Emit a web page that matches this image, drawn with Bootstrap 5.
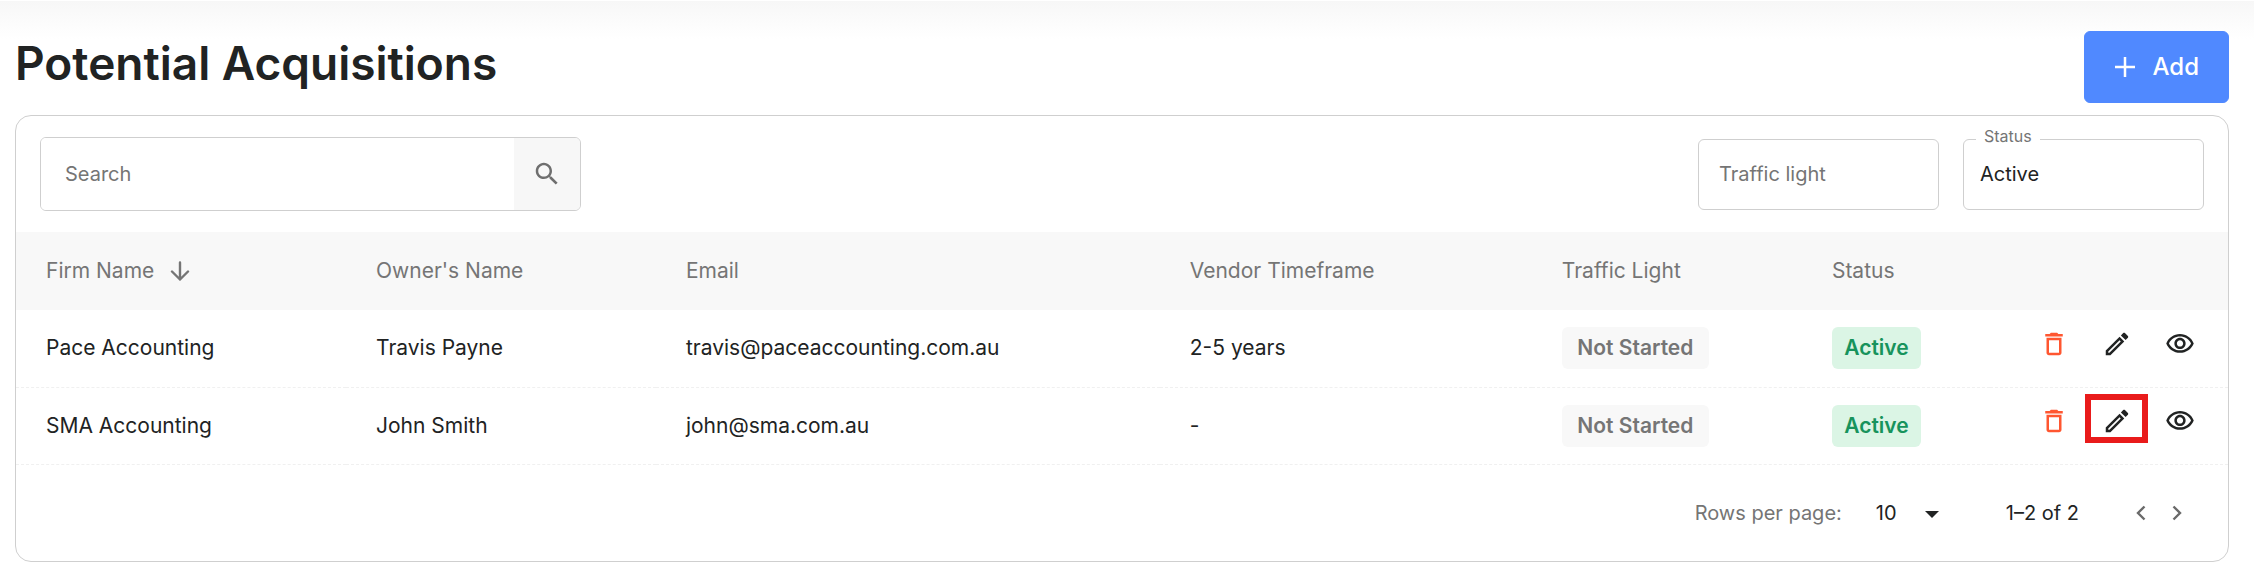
<!DOCTYPE html>
<html lang="en">
<head>
<meta charset="utf-8">
<meta name="viewport" content="width=device-width, initial-scale=1">
<title>Potential Acquisitions</title>
<link href="https://cdn.jsdelivr.net/npm/bootstrap@5.3.0/dist/css/bootstrap.min.css" rel="stylesheet">
<style>
  :root { --ink: #212323; --soft: #757575; --line: #cfcfcf; --tint: #f8f8f8; }
  body { font-family: Inter, "Open Sans", sans-serif; font-size: 20px; line-height: 30px; color: var(--ink); background: #fff; }
  .page-shell { padding: 30px 25px 9px 15px; background: linear-gradient(#f7f7f7, #fff 38px) no-repeat; border-top: 1px solid #fff; }
  .page-title { font-size: 46px; line-height: 64px; font-weight: 600; }
  .btn-add { --bs-btn-bg: #5089ff; --bs-btn-border-color: #5089ff; --bs-btn-color: #fff; --bs-btn-hover-bg: #3f78ee; --bs-btn-hover-color: #fff;
    height: 72px; padding: 0 29px; gap: 17px; font-size: 24px; font-weight: 500; border-radius: 6px; }
  .panel { border: 1px solid var(--line); border-radius: 16px; }
  .toolbar { padding: 21px 24px; }
  .search-group { width: 541px; height: 74px; border: 1px solid var(--line); border-radius: 6px; overflow: hidden; }
  .search-group .form-control { border: 0; padding: 0 24px; font-size: 20px; color: var(--ink); }
  .search-group .form-control::placeholder { color: var(--soft); opacity: 1; }
  .search-group .btn { flex: 0 0 66px; background: #f7f7f7; color: #6f6f6f; border-radius: 0; padding: 0; }
  .filter-box { width: 241px; }
  .filter-box select { height: 71px; border: 1px solid var(--line); border-radius: 6px; font-size: 20px; background: #fff; color: var(--ink); appearance: none; padding: 0 16px; }
  .filter-box select.unset { color: var(--soft); padding: 0 20px; }
  .filter-box label { top: -13px; left: 13px; padding: 0 8px; background: #fff; color: var(--soft); font-size: 16px; line-height: 20px; }
  .firms { table-layout: fixed; --bs-table-color: var(--ink); --bs-table-bg: transparent; color: var(--ink); font-size: 21px; }
  .firms th, .firms td { padding: 0 0 0 30px; height: 77px; border: 0; white-space: nowrap; vertical-align: middle; }
  .firms th { height: 78px; background: var(--tint); color: var(--soft); font-weight: 400; }
  .firms tbody td { border-bottom: 1px dashed #f0f0f0; }
  .col-firm { width: 14.92%; } .col-owner { width: 14.01%; } .col-email { width: 22.78%; }
  .col-time { width: 16.82%; } .col-light { width: 12.21%; } .col-state { width: 8.5%; }
  .chip { display: inline-block; height: 42px; line-height: 42px; border-radius: 6px; text-align: center; font-weight: 600; }
  .chip-idle { min-width: 147px; background: var(--tint); color: var(--soft); }
  .chip-live { min-width: 89px; background: #dbf5e5; color: #17935c; }
  .firms td.actions { padding: 0 17px 14px 0; }
  .btn-act { width: 63px; height: 49px; padding: 5px 0 0; border: 0; border-radius: 0; color: var(--ink); display: flex; align-items: center; justify-content: center; }
  .btn-act.danger { color: #ff5630; }
  .btn-act.focused { border: 6px solid #e91b1b; }
  .pager { height: 96px; padding-right: 33px; }
  .pager label { color: var(--soft); }
  .pager select { appearance: none; border: 0; background: transparent; width: 72px; color: var(--ink); font-size: 20px; line-height: 30px; padding: 0; }
  .pager .rows-pick { margin: 0 58px 0 34px; }
  .pager .caret { right: 9px; top: 13px; }
  .pager .page-range { margin-right: 44px; }
  .btn-page { width: 36px; height: 36px; padding: 0; color: #6a6a6a; display: flex; align-items: center; justify-content: center; }
  svg { display: block; flex: none; }
</style>
</head>
<body>
<svg class="d-none" aria-hidden="true">
  <symbol id="i-trash" viewBox="0 0 24 24"><path d="M6 19c0 1.100.900 2 2 2h8c1.100 0 2-.900 2-2V7H6v12zM8 9h8v10H8V9zm7.500-5l-1-1h-5l-1 1H5v2h14V4h-3.500z"/></symbol>
  <symbol id="i-pen" viewBox="0 0 24 24"><path d="M14.060 9.020l.920.920L5.920 19H5v-.920l9.060-9.060M17.660 3c-.250 0-.510.100-.700.290l-1.830 1.830 3.750 3.750 1.830-1.830c.390-.390.390-1.020 0-1.410l-2.340-2.340c-.200-.200-.450-.290-.710-.290zm-3.600 3.190L3 17.250V21h3.750L17.810 9.940l-3.750-3.750z"/></symbol>
  <symbol id="i-eye" viewBox="0 0 24 24"><path d="M12 6c3.790 0 7.170 2.130 8.820 5.500C19.170 14.870 15.790 17 12 17S4.830 14.870 3.180 11.500C4.830 8.130 8.210 6 12 6m0-2C7 4 2.730 7.110 1 11.500c1.730 4.390 6 7.500 11 7.500s9.270-3.110 11-7.500c-1.730-4.390-6-7.500-11-7.500zm0 5c1.380 0 2.500 1.120 2.500 2.500s-1.120 2.500-2.500 2.500-2.500-1.120-2.500-2.500 1.120-2.500 2.500-2.500m0-2c-2.480 0-4.500 2.020-4.500 4.500s2.020 4.500 4.500 4.500 4.500-2.020 4.500-4.500-2.020-4.500-4.500-4.500z"/></symbol>
</svg>
<main class="page-shell">
  <header class="d-flex justify-content-between align-items-start mb-2 pb-1">
    <h1 class="page-title mb-0">Potential Acquisitions</h1>
    <button type="button" class="btn btn-add d-flex align-items-center">
      <svg width="22" height="22" viewBox="0 0 22 22" fill="none" stroke="currentColor" stroke-width="2.500"><path d="M11 1v20M1 11h20"/></svg>
      Add
    </button>
  </header>
  <section class="panel">
    <div class="toolbar d-flex justify-content-between align-items-center">
      <form class="search-group d-flex">
        <input type="search" class="form-control rounded-0" placeholder="Search" aria-label="Search">
        <button type="button" class="btn d-flex align-items-center justify-content-center" aria-label="Search firms">
          <svg width="30" height="30" viewBox="0 0 24 24" fill="currentColor"><path d="M15.500 14h-.790l-.280-.270C15.410 12.590 16 11.110 16 9.500 16 5.910 13.090 3 9.500 3S3 5.910 3 9.500 5.910 16 9.500 16c1.610 0 3.090-.590 4.230-1.570l.270.280v.790l5 4.990L20.490 19l-4.990-5zm-6 0C7.010 14 5 11.990 5 9.500S7.010 5 9.500 5 14 7.010 14 9.500 11.990 14 9.500 14z"/></svg>
        </button>
      </form>
      <div class="d-flex gap-4">
        <div class="filter-box">
          <select class="w-100 unset" aria-label="Traffic light"><option>Traffic light</option></select>
        </div>
        <div class="filter-box position-relative">
          <select class="w-100" id="status"><option>Active</option></select>
          <label class="position-absolute" for="status">Status</label>
        </div>
      </div>
    </div>
    <table class="table firms mb-0">
      <colgroup><col class="col-firm"><col class="col-owner"><col class="col-email"><col class="col-time"><col class="col-light"><col class="col-state"><col></colgroup>
      <thead>
        <tr>
          <th scope="col"><span class="d-flex align-items-center gap-3">Firm Name
            <svg width="20" height="20" viewBox="0 0 20 20" fill="none" stroke="currentColor" stroke-width="2.400" stroke-linecap="round" stroke-linejoin="round"><path d="M10 1.500v17M2 10.500l8 8 8-8"/></svg></span></th>
          <th scope="col">Owner's Name</th><th scope="col">Email</th><th scope="col">Vendor Timeframe</th><th scope="col">Traffic Light</th><th scope="col">Status</th><th aria-label="Actions"></th>
        </tr>
      </thead>
      <tbody>
        <tr>
          <td>Pace Accounting</td><td>Travis Payne</td><td>travis@paceaccounting.com.au</td><td>2-5 years</td>
          <td><span class="chip chip-idle">Not Started</span></td><td><span class="chip chip-live">Active</span></td>
          <td class="actions"><div class="d-flex justify-content-end">
            <button type="button" class="btn btn-act danger" aria-label="Delete"><svg width="30" height="30" fill="currentColor"><use href="#i-trash"/></svg></button>
            <button type="button" class="btn btn-act" aria-label="Edit"><svg width="30" height="30" fill="currentColor"><use href="#i-pen"/></svg></button>
            <button type="button" class="btn btn-act" aria-label="View"><svg width="30" height="30" fill="currentColor"><use href="#i-eye"/></svg></button>
          </div></td>
        </tr>
        <tr>
          <td>SMA Accounting</td><td>John Smith</td><td>john@sma.com.au</td><td>-</td>
          <td><span class="chip chip-idle">Not Started</span></td><td><span class="chip chip-live">Active</span></td>
          <td class="actions"><div class="d-flex justify-content-end">
            <button type="button" class="btn btn-act danger" aria-label="Delete"><svg width="30" height="30" fill="currentColor"><use href="#i-trash"/></svg></button>
            <button type="button" class="btn btn-act focused" aria-label="Edit"><svg width="30" height="30" fill="currentColor"><use href="#i-pen"/></svg></button>
            <button type="button" class="btn btn-act" aria-label="View"><svg width="30" height="30" fill="currentColor"><use href="#i-eye"/></svg></button>
          </div></td>
        </tr>
      </tbody>
    </table>
    <footer class="pager d-flex align-items-center justify-content-end">
      <label for="rows" class="text-nowrap">Rows per page:</label>
      <div class="rows-pick position-relative">
        <select id="rows"><option>10</option></select>
        <svg class="caret position-absolute" width="14" height="7" viewBox="0 0 14 7" fill="currentColor"><path d="M0 0h14L7 7z"/></svg>
      </div>
      <span class="page-range">1–2 of 2</span>
      <button type="button" class="btn btn-page" aria-label="Previous page"><svg width="10" height="16" viewBox="0 0 10 16" fill="none" stroke="currentColor" stroke-width="2.400"><path d="M8.500 1.500L2 8l6.500 6.500"/></svg></button>
      <button type="button" class="btn btn-page" aria-label="Next page"><svg width="10" height="16" viewBox="0 0 10 16" fill="none" stroke="currentColor" stroke-width="2.400"><path d="M1.500 1.500L8 8l-6.500 6.500"/></svg></button>
    </footer>
  </section>
</main>
<script src="https://cdn.jsdelivr.net/npm/bootstrap@5.3.0/dist/js/bootstrap.bundle.min.js"></script>
</body>
</html>
